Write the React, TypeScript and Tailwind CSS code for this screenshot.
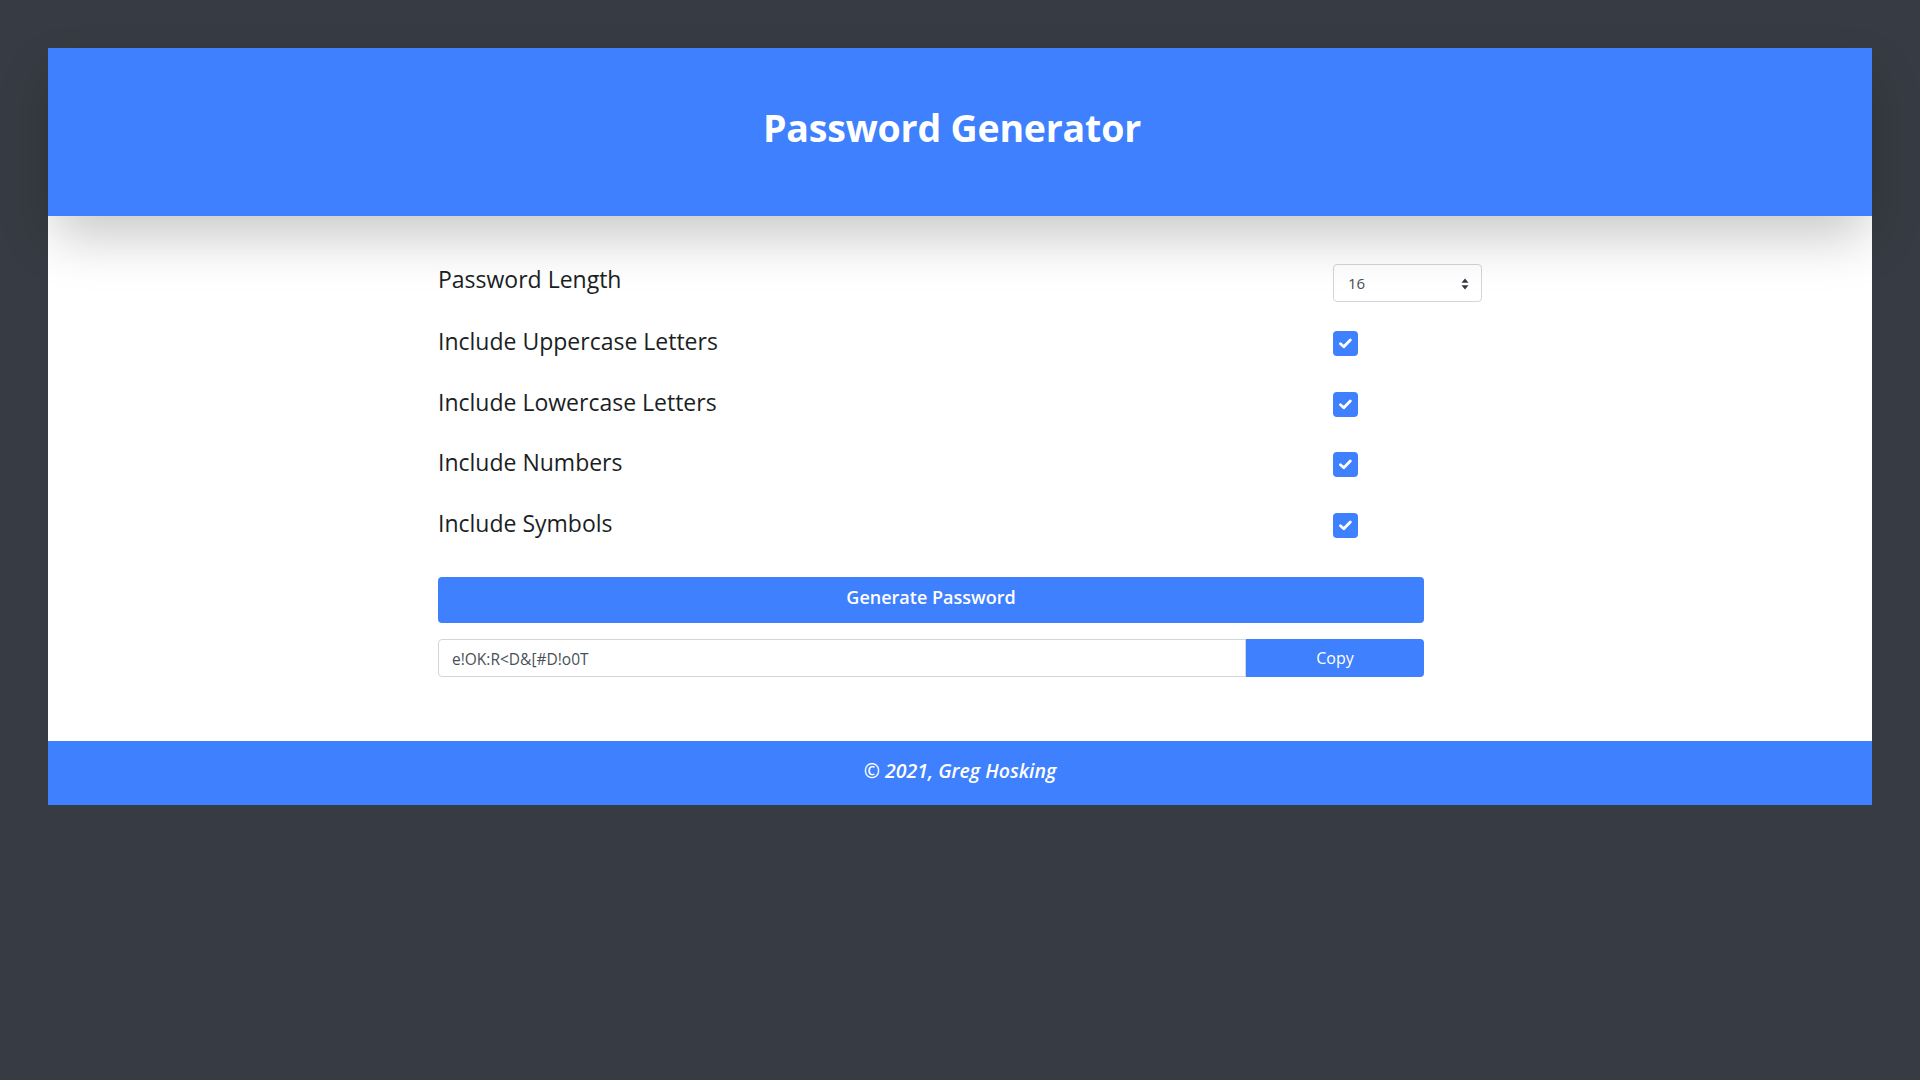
import { useState } from 'react'

const options = [
  'Include Uppercase Letters',
  'Include Lowercase Letters',
  'Include Numbers',
  'Include Symbols',
]

const CheckBox = ({ checked, onToggle }: { checked: boolean; onToggle: () => void }) => (
  <button
    onClick={onToggle}
    className={`w-[25px] h-[25px] rounded-[4px] flex items-center justify-center ${checked ? 'bg-[#3e80fd]' : 'bg-white border border-gray-300'}`}
  >
    {checked && (
      <svg width="13" height="11" viewBox="0 0 13 11" fill="none">
        <path d="M1.5 5.8 L4.8 8.8 L11.3 2" stroke="white" strokeWidth="2.8" strokeLinecap="round" strokeLinejoin="round" />
      </svg>
    )}
  </button>
)

const App = () => {
  const [checks, setChecks] = useState([true, true, true, true])
  const toggle = (i: number) => setChecks(c => c.map((v, j) => (j === i ? !v : v)))

  return (
    <div className="min-h-screen bg-[#373b43] px-12 pt-12 font-['Open_Sans',sans-serif]">
      <div className="flex flex-col">
        <header className="relative z-10 h-[168px] bg-[#3e80fd] flex items-center justify-center shadow-[0_25px_50px_-5px_rgba(0,0,0,0.22)]">
          <h1 className="text-[37.5px] font-bold text-white tracking-[-0.2px] -mt-2 mr-4">Password Generator</h1>
        </header>

        <main className="bg-white pt-12 pb-16">
          <div className="w-[1044px] mx-auto">
            <div className="flex flex-col gap-[22.5px]">
              <div className="grid grid-cols-[895px_149px] items-center h-[38px]">
                <span className="text-[23px] text-[#1b1f24] -mt-2">Password Length</span>
                <div className="relative h-[38px] border border-gray-300 rounded-[4px] flex items-center pl-[14px] text-[15px] text-[#495057]">
                  16
                  <svg className="absolute right-[12px] top-[13px]" width="8" height="12" viewBox="0 0 8 12">
                    <path d="M4 0.5 L7.5 4.8 L0.5 4.8 Z" fill="#343a40" />
                    <path d="M4 11.5 L7.5 7.2 L0.5 7.2 Z" fill="#343a40" />
                  </svg>
                </div>
              </div>
              {options.map((label, i) => (
                <div key={label} className="grid grid-cols-[895px_149px] items-center h-[38px]">
                  <span className="text-[23px] text-[#1b1f24] -mt-1">{label}</span>
                  <CheckBox checked={checks[i]} onToggle={() => toggle(i)} />
                </div>
              ))}
            </div>

            <button className="mt-[33px] w-[986px] h-[46px] rounded-[4px] bg-[#3e80fd] text-white text-[18px] font-semibold pb-[6px]">
              Generate Password
            </button>

            <div className="mt-4 w-[986px] flex h-[38px]">
              <input
                readOnly
                value="e!OK:R<D&[#D!o0T"
                className="flex-1 border border-gray-300 rounded-l-[4px] px-[13px] pt-[3px] text-[15.5px] text-[#495057] outline-none"
              />
              <button className="w-[178px] bg-[#3e80fd] text-white text-[16px] rounded-r-[4px]">Copy</button>
            </div>
          </div>
        </main>

        <footer className="h-16 bg-[#3e80fd] flex items-center justify-center">
          <p className="text-white italic font-semibold text-[19.5px] -mt-1">© 2021, Greg Hosking</p>
        </footer>
      </div>
    </div>
  )
}

export default App
